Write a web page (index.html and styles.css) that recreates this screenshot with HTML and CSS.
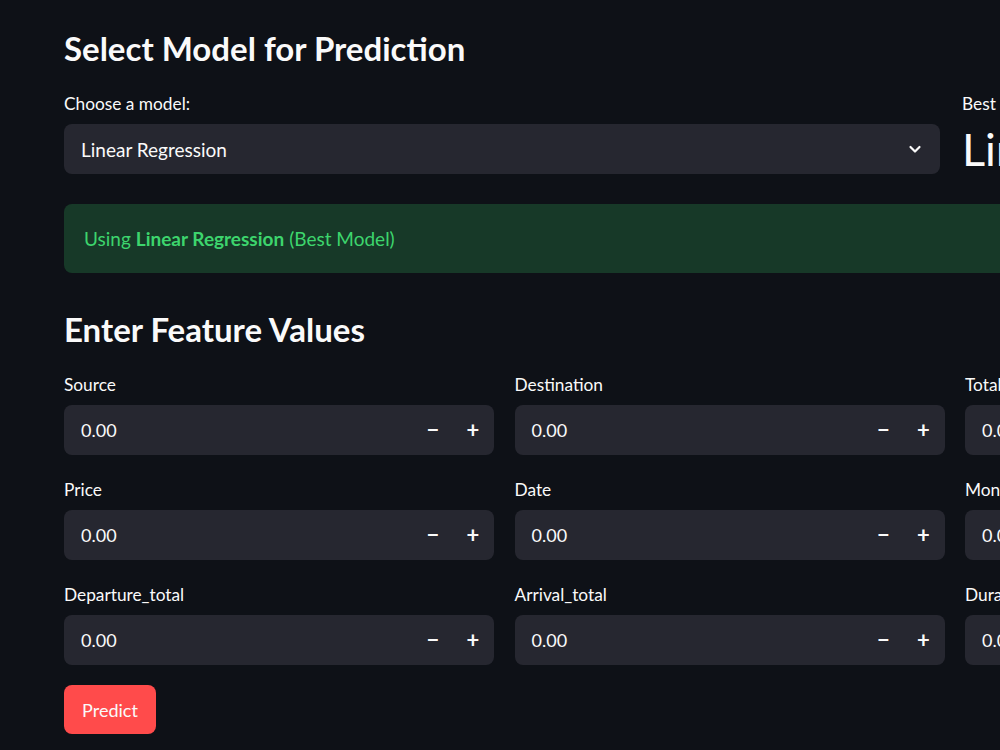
FILE: index.html
```html
<!DOCTYPE html>
<html lang="en">
<head>
<meta charset="utf-8">
<title>Select Model for Prediction</title>
<link rel="stylesheet" href="styles.css">
</head>
<body>
<main class="main">
  <h2 class="heading heading-first">Select Model for Prediction</h2>
  <div class="top-row">
    <div class="field">
      <label class="label">Choose a model:</label>
      <div class="select">
        <span class="select-value">Linear Regression</span>
        <svg class="chevron" width="16" height="16" viewBox="0 0 16 16" aria-hidden="true"><path d="M3.5 6 L8 10.5 L12.5 6" fill="none" stroke="#fafafa" stroke-width="2.2" stroke-linecap="round" stroke-linejoin="round"/></svg>
      </div>
    </div>
    <div class="metric">
      <div class="label">Best Model</div>
      <div class="metric-value">Linear Regression</div>
    </div>
  </div>
  <div class="alert">Using <strong>Linear Regression</strong> (Best Model)</div>
  <h2 class="heading heading-second">Enter Feature Values</h2>
  <div class="inputs">
    <div class="field"><label class="label">Source</label><div class="num"><span class="num-value">0.00</span><span class="step">&minus;</span><span class="step">+</span></div></div>
    <div class="field"><label class="label">Destination</label><div class="num"><span class="num-value">0.00</span><span class="step">&minus;</span><span class="step">+</span></div></div>
    <div class="field"><label class="label">Total_Stops</label><div class="num"><span class="num-value">0.00</span><span class="step">&minus;</span><span class="step">+</span></div></div>
    <div class="field"><label class="label">Price</label><div class="num"><span class="num-value">0.00</span><span class="step">&minus;</span><span class="step">+</span></div></div>
    <div class="field"><label class="label">Date</label><div class="num"><span class="num-value">0.00</span><span class="step">&minus;</span><span class="step">+</span></div></div>
    <div class="field"><label class="label">Month</label><div class="num"><span class="num-value">0.00</span><span class="step">&minus;</span><span class="step">+</span></div></div>
    <div class="field"><label class="label">Departure_total</label><div class="num"><span class="num-value">0.00</span><span class="step">&minus;</span><span class="step">+</span></div></div>
    <div class="field"><label class="label">Arrival_total</label><div class="num"><span class="num-value">0.00</span><span class="step">&minus;</span><span class="step">+</span></div></div>
    <div class="field"><label class="label">Duration_total</label><div class="num"><span class="num-value">0.00</span><span class="step">&minus;</span><span class="step">+</span></div></div>
  </div>
  <button class="btn">Predict</button>
</main>
</body>
</html>
```

FILE: styles.css
```css
html, body {
  margin: 0;
  padding: 0;
  background: #0e1117;
  overflow: hidden;
}
body {
  width: 1000px;
  height: 750px;
  font-family: "Lato", "Noto Sans", sans-serif;
  color: #fafafa;
}
.main {
  width: 1331px;
  padding: 26px 0 0 64px;
  box-sizing: content-box;
}
.heading {
  margin: 0;
  font-size: 33px;
  font-weight: 700;
  line-height: 44px;
  letter-spacing: 0;
}
.heading-first {
  margin-bottom: 24px;
}
.heading-second {
  margin-top: 34px;
  margin-bottom: 24px;
}
.top-row {
  display: grid;
  grid-template-columns: 876px 1fr;
  column-gap: 22px;
}
.field {
  display: flex;
  flex-direction: column;
}
.label {
  display: block;
  font-size: 17.3px;
  line-height: 20px;
  height: 20px;
  margin-bottom: 10px;
  color: #fafafa;
  white-space: nowrap;
}
.select {
  height: 50px;
  background: #262730;
  border-radius: 8px;
  display: flex;
  align-items: center;
  padding: 0 17px;
  justify-content: space-between;
}
.select-value {
  font-size: 19px;
}
.chevron {
  margin-right: 0;
}
.metric-value {
  font-size: 45px;
  line-height: 50px;
  white-space: nowrap;
  font-weight: 400;
  margin-top: 4px;
}
.alert {
  margin-top: 30px;
  height: 69px;
  background: #173928;
  border-radius: 8px;
  color: #3dd56d;
  font-size: 19px;
  display: flex;
  align-items: center;
  padding-left: 20px;
  gap: 5px;
  white-space: nowrap;
}
.alert strong {
  font-weight: 700;
}
.inputs {
  display: grid;
  grid-template-columns: repeat(3, 430px);
  column-gap: 20.5px;
  row-gap: 25px;
}
.num {
  height: 50px;
  background: #262730;
  border-radius: 8px;
  display: flex;
  align-items: center;
  padding-left: 17px;
}
.num-value {
  flex: 1;
  font-size: 18px;
}
.step {
  width: 40px;
  text-align: center;
  font-size: 22px;
  font-weight: 700;
  line-height: 50px;
}
.step:last-child {
  margin-right: 1px;
}
.btn {
  margin-top: 20px;
  width: 92px;
  height: 49px;
  border: none;
  border-radius: 8px;
  background: #ff4b4b;
  color: #fafafa;
  font-family: inherit;
  font-size: 18px;
  padding: 0;
}
```
